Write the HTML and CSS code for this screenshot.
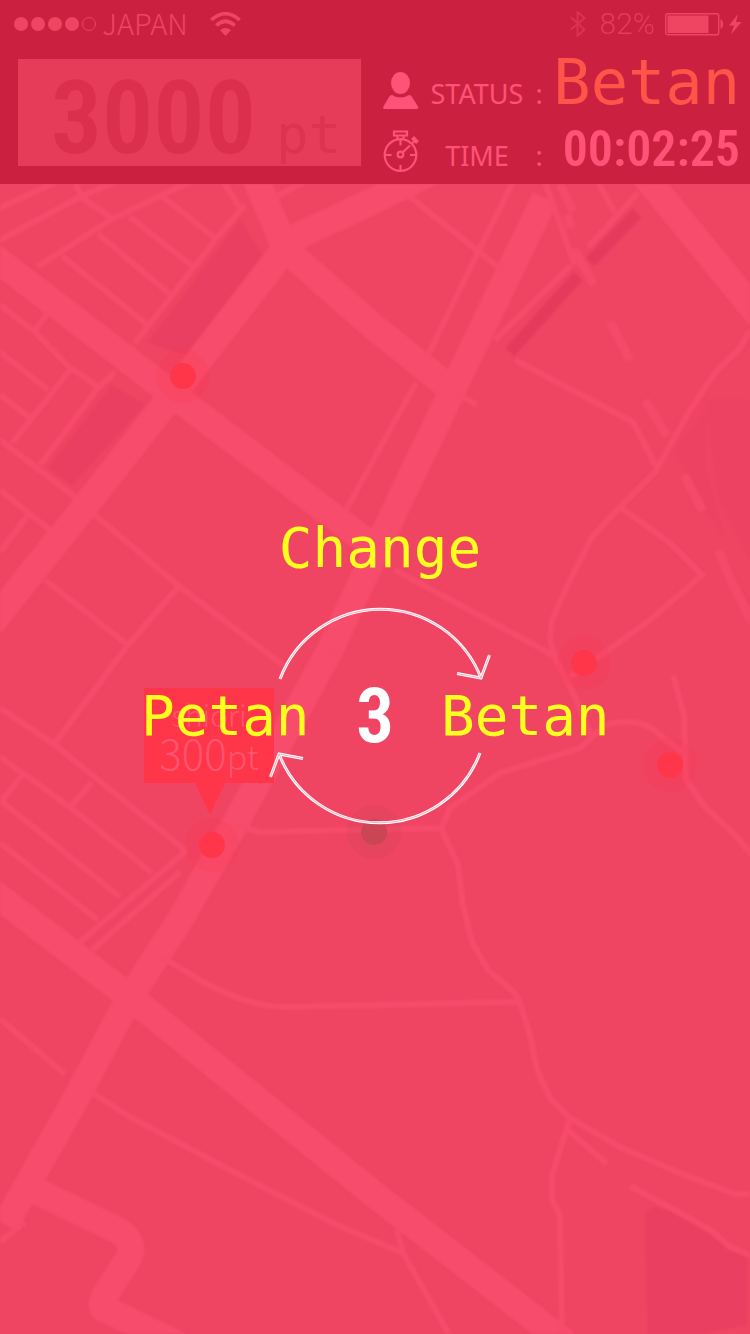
FILE: index.html
```html
<!DOCTYPE html>
<html lang="en">
<head>
<meta charset="utf-8">
<meta name="viewport" content="width=device-width, initial-scale=1">
<title>Betan</title>
<link rel="stylesheet" href="styles.css">
</head>
<body>
<div class="screen">
  <header class="top">
    <div class="device">
      <div class="carrier">
        <svg class="signal" width="84" height="16" viewBox="0 0 84 16" aria-hidden="true">
          <g fill="currentColor"><circle cx="7" cy="8" r="7"/><circle cx="24" cy="8" r="7"/><circle cx="41" cy="8" r="7"/><circle cx="58" cy="8" r="7"/></g>
          <circle cx="75" cy="8" r="6.5" fill="none" stroke="currentColor"/>
        </svg>
        <span class="network">JAPAN</span>
        <svg width="31" height="25" viewBox="0 0 31 25" aria-hidden="true">
          <g fill="none" stroke="currentColor" stroke-width="3.6"><path d="M1.3 8Q15.500 -4.500 29.700 8"/><path d="M6.300 13.500Q15.500 5 24.700 13.500"/></g>
          <path d="M10 18.300Q15.500 13.500 21 18.300L15.500 24z" fill="currentColor"/>
        </svg>
      </div>
      <div class="power">
        <svg class="bluetooth" width="16" height="26" viewBox="0 0 16 26" fill="none" stroke="currentColor" stroke-width="1.800" aria-hidden="true"><path d="M1 6.500L14.500 18.500L7.500 25V1L14.500 7L1 18.500"/></svg>
        <span class="percent">82%</span>
        <svg width="77" height="23" viewBox="0 0 77 23" aria-hidden="true">
          <rect x=".7" y=".7" width="53" height="21" rx="2" fill="none" stroke="currentColor" stroke-width="1.400"/>
          <rect x="2.500" y="2.500" width="41" height="17.500" fill="currentColor"/>
          <path d="M55.500 6.500q2.500 0 2.500 4.500t-2.500 4.500z" fill="currentColor"/>
          <path d="M73 1L64 12.500h5L66 21.500L76.500 9H71z" fill="currentColor"/>
        </svg>
      </div>
    </div>
    <div class="board">
      <div class="score"><span class="score-number">3000</span><span class="score-unit">pt</span></div>
      <dl class="facts">
        <div class="fact">
          <dt>
            <svg width="36" height="38" viewBox="0 0 36 38" fill="currentColor" aria-hidden="true"><ellipse cx="17.500" cy="11" rx="9.500" ry="11"/><path d="M9 23q8.500 5 17 0q2 0 3 2l6 9.500q1 2.500-1.500 2.500h-32Q-.5 37 .5 34.500L6 25q1-2 3-2z"/></svg>
            <span>STATUS</span><span class="colon">:</span>
          </dt>
          <dd class="status">Betan</dd>
        </div>
        <div class="fact">
          <dt>
            <svg width="36" height="42" viewBox="0 0 36 42" fill="none" stroke="currentColor" stroke-width="2.200" aria-hidden="true">
              <circle cx="17.500" cy="25" r="15.800"/><path d="M11 1.500h13v4h-13zM14.500 6v3M20.500 6v3M17.500 9.500v6M17.500 35v6M2 25h6.500M27 25h6.500M19.500 22.500L27 15.500M29.500 13l2.500-2.500"/><circle cx="17.500" cy="24.500" r="2.800"/><path d="M29.500 7.500l5 5" stroke-width="4"/>
            </svg>
            <span>TIME</span><span class="colon">:</span>
          </dt>
          <dd class="clock">00:02:25</dd>
        </div>
      </dl>
    </div>
  </header>

  <main class="stage">
    <div class="map">
      <svg class="streets" viewBox="0 184 750 1150" preserveAspectRatio="xMidYMin slice" aria-hidden="true">
        <g class="blocks">
          <path d="M240 220L262 255L185 355L148 342zM112 385L145 405L72 485L48 468z"/>
          <path d="M645 1212L655 1207L675 1212L700 1228L735 1252L747 1258V1325L700 1334H648z"/>
          <path class="strip" d="M637 213L590 262M578 276L510 352"/>
          <path class="faint" d="M675 450L705 410V470L725 540L700 500zM705 400H750V560L720 500z"/>
        </g>
        <g class="wide">
          <path d="M-10 254L180 400L375 548"/>
          <path d="M286 248L180 385L90 500L-10 625"/>
          <path d="M250 165L286 250L375 328L460 396"/>
          <path d="M284 250L300 235L375 200L440 168"/>
          <path d="M545 198L455 385L395 510L330 650L240 815L180 920L130 997L75 1100L5 1225"/>
          <path d="M640 170L760 317"/>
          <path d="M-10 890L130 997L375 1195L575 1350"/>
          <path d="M20 1183L115 1229Q140 1242 125 1264L108 1290Q100 1304 103 1308L185 1348"/>
        </g>
        <g class="narrow">
          <path d="M0 208L60 180M0 240L80 197L120 180M37 267L110 220L162 195L195 180M75 182L82 198L115 220M163 197L215 238M130 217L195 268M98 234L172 296M62 256L148 325M245 205L215 240L135 343M222 180L240 208M275 197L305 182"/>
          <path d="M0 305L35 332L68 366L100 388M48 313L35 330M0 352L48 390M70 370L12 443M0 395L30 418M115 372L98 388L40 465M0 440L75 497M0 490L50 530"/>
          <path d="M28 515L0 552M95 515L180 587L283 665M178 587L128 645L55 743M45 580L128 645M0 708L55 745L185 850M0 757L70 807L152 873M22 775L0 803M92 782L70 807M0 800L120 897M0 843L98 920M187 850L80 942M180 872L92 950"/>
          <path d="M513 182L479 250L428 355M416 383L375 457L345 512M410 197L502 270M638 193L588 247M571 265L495 340M598 182L615 213M545 182L575 265M455 392L477 405M327 650L338 656"/>
          <path d="M515 360L633 422L657 468M750 330L740 348L714 374L690 410L663 458L655 472L620 507L592 537L570 580L552 620L550 640L557 662L575 697L592 737"/>
          <path d="M620 507L670 543L702 575L650 620L597 658L570 677M395 570L553 655"/>
          <path d="M441 830L450 808L500 773L580 748L605 725Q640 715 660 735L682 752M673 675L684 715L686 780L705 807L735 835L752 855"/>
          <path d="M235 825L260 832L441 828L458 865L463 905L472 942L488 970L515 993L520 1003L530 1035L537 1070L550 1098L570 1118L620 1147L680 1173L735 1194H752M570 1118L552 1175V1200L560 1215L562 1334"/>
          <path d="M155 953L205 983Q250 1007 285 1007L518 1002M568 1130L607 1164M630 1186L678 1212L712 1231L730 1247L752 1256"/>
          <path d="M0 1019L65 1074M85 1088L130 1117L230 1170L335 1224L403 1253L450 1336M397 1230L403 1253M25 1222L0 1242"/>
        </g>
        <path class="rail" d="M560 184L573 211M567 214L571 228M574 249L594 285M610 322L630 360M645 400L667 436M684 475L703 511M718 550L733 585L752 622"/>
      </svg>
      <svg class="pins" viewBox="0 184 750 1150" preserveAspectRatio="xMidYMin slice" aria-hidden="true">
        <g class="halo"><circle cx="183" cy="376" r="27"/><circle cx="584" cy="663" r="27"/><circle cx="670" cy="765" r="27"/><circle cx="212" cy="845" r="27"/><circle class="self" cx="374" cy="832" r="27"/></g>
        <g class="core"><circle cx="183" cy="376" r="13"/><circle cx="584" cy="663" r="13"/><circle cx="670" cy="765" r="13"/><circle cx="212" cy="845" r="13"/><circle class="self" cx="374" cy="832" r="13"/></g>
      </svg>
      <div class="callout">
        <span class="callout-name">shiori</span>
        <span class="callout-score">300<small>pt</small></span>
      </div>
    </div>

    <section class="change">
      <h1 class="word">Change</h1>
      <div class="swap">
        <svg class="ring" width="224" height="224" viewBox="-112 -112 224 224" fill="none" aria-hidden="true">
          <g id="arrow">
            <path class="ring-line" d="M-100 -37A107.500 107.500 0 0 1 101 -38"/><path class="ring-line" d="M77 -42.500L101 -38L109.500 -61"/>
            <path class="ring-core" d="M-100 -37A107.500 107.500 0 0 1 101 -38"/><path class="ring-core" d="M77 -42.500L101 -38L109.500 -61"/>
          </g>
          <use href="#arrow" transform="rotate(180)"/>
        </svg>
        <span class="word">Petan</span>
        <span class="count">3</span>
        <span class="word">Betan</span>
      </div>
    </section>
  </main>
</div>
</body>
</html>
```

FILE: styles.css
```css
* { box-sizing: border-box; }

body {
  margin: 0;
  background: #f04463;
  font-family: "Noto Sans", sans-serif;
}

.screen {
  display: flex;
  flex-direction: column;
  min-height: 100vh;
}

/* header */
.top {
  background: #cc2041;
  color: #ff5276;
  padding-bottom: 12px;
}

.device {
  display: flex;
  justify-content: space-between;
  align-items: center;
  height: 48px;
  padding: 0 8px 0 14px;
  color: #f04463;
}

.carrier, .power { display: flex; align-items: center; }
.signal { margin-right: 4px; }
.network {
  margin-right: 22px;
  font: 300 29px/28px "Noto Sans CJK JP", sans-serif;
  padding-bottom: 4px;
}
.bluetooth { opacity: .5; margin-right: 14px; }
.percent {
  margin-right: 10px;
  font: 300 30px/32px Roboto, sans-serif;
  opacity: .75;
}

.board {
  display: grid;
  grid-template-columns: 343fr 357fr;
  gap: 22px;
  padding: 0 10px 0 18px;
}

.score {
  display: flex;
  justify-content: flex-end;
  align-items: baseline;
  gap: 20px;
  height: 107px;
  margin-top: 11px;
  padding-right: 20px;
  background: #e63b59;
  color: #db2f4d;
}
.score-number { font: 600 102px/118px "Roboto Condensed", Roboto, sans-serif; }
.score-unit { font: 54px/64px "DejaVu Sans Mono", monospace; opacity: .7; }

.facts { margin: 0; }
.fact {
  display: flex;
  justify-content: space-between;
  align-items: flex-end;
  height: 62px;
}
.fact dt {
  display: grid;
  grid-template-columns: 36px 108px 8px;
  column-gap: 4px;
  align-items: end;
  font-size: 27px;
  line-height: 32px;
}
.fact dt span { text-align: center; }
.fact dd { margin: 0; }
.status {
  color: #ff5549;
  font: 62px/54px "DejaVu Sans Mono", monospace;
}
.clock { font: 600 50px/46px "Roboto Condensed", Roboto, sans-serif; }

/* map */
.stage {
  position: relative;
  flex: 1;
  padding: 328px 0 200px;
}
.map { position: absolute; inset: 0; overflow: hidden; }
.streets, .pins { position: absolute; inset: 0; width: 100%; height: 100%; }
.streets { fill: none; stroke: #f84c6c; filter: blur(1px); }
.blocks { fill: #ea3f60; stroke: none; }
.strip { fill: none; stroke: #e63a5c; stroke-width: 12; }
.faint { fill: #ee4262; }
.wide { stroke-width: 27; }
.narrow { stroke-width: 6; stroke: #f74b6b; }
.rail { stroke-width: 9; stroke: #f64a6a; }
.halo { fill: #ff3649; fill-opacity: .15; }
.core { fill: #ff3649; }
.halo .self { fill: #a04450; fill-opacity: .1; }
.core .self { fill: #cb4655; }

.callout {
  position: absolute;
  left: 144px;
  top: 504px;
  display: flex;
  flex-direction: column;
  align-items: center;
  width: 130px;
  height: 95px;
  padding-top: 10px;
  background: #ff3649;
  color: #ff5570;
  font-family: "Noto Sans CJK JP", sans-serif;
  font-weight: 300;
}
.callout::after {
  content: "";
  position: absolute;
  top: 100%;
  left: 51px;
  width: 30px;
  height: 32px;
  background: inherit;
  clip-path: polygon(0 0, 100% 0, 50% 100%);
}
.callout-name { font-size: 30px; line-height: 32px; }
.callout-score { font-size: 42px; line-height: 44px; }
.callout-score small { font-size: 34px; }

/* role change */
.change {
  position: relative;
  display: flex;
  flex-direction: column;
  align-items: center;
}
.word {
  margin: 0;
  color: #ffff1f;
  font: 56px/72px "DejaVu Sans Mono", monospace;
}
.change > .word { padding-left: 10px; }
.swap {
  position: relative;
  display: grid;
  grid-template-columns: 168px 132px 168px;
  align-items: center;
  height: 224px;
  margin-top: 20px;
}
.ring { position: absolute; left: 127px; top: 0; }
.ring-line { stroke: #fff; stroke-width: 3; }
.ring-core { stroke: #f8b0bf; stroke-width: 1; }
.count {
  color: #fff;
  text-align: center;
  font: 600 76px/80px "Roboto Condensed", Roboto, sans-serif;
}
```
